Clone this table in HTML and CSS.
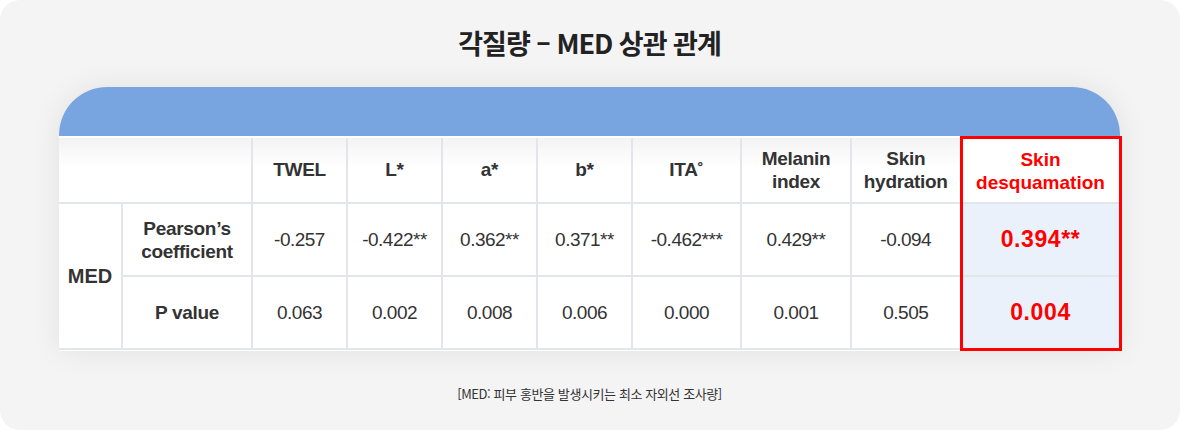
FILE: index.html
```html
<!DOCTYPE html>
<html lang="ko">
<head>
<meta charset="utf-8">
<link rel="stylesheet" href="styles.css">
</head>
<body>
<div class="card">
  <h1 class="title">각질량 – MED 상관 관계</h1>
  <div class="table-wrap">
    <div class="table-head-bar"></div>
    <table class="data">
      <colgroup>
        <col class="c-med"><col class="c-label"><col class="c-std"><col class="c-std"><col class="c-std"><col class="c-std"><col class="c-ita"><col class="c-wide"><col class="c-wide"><col class="c-hl">
      </colgroup>
      <thead>
        <tr>
          <th colspan="2"></th>
          <th>TWEL</th>
          <th>L*</th>
          <th>a*</th>
          <th>b*</th>
          <th>ITA˚</th>
          <th>Melanin<br>index</th>
          <th>Skin<br>hydration</th>
          <th class="hl hl-top">Skin<br>desquamation</th>
        </tr>
      </thead>
      <tbody>
        <tr>
          <th rowspan="2" class="rowhead">MED</th>
          <th class="rowlabel">Pearson’s<br>coefficient</th>
          <td>-0.257</td>
          <td>-0.422**</td>
          <td>0.362**</td>
          <td>0.371**</td>
          <td>-0.462***</td>
          <td>0.429**</td>
          <td>-0.094</td>
          <td class="hl hl-val">0.394**</td>
        </tr>
        <tr>
          <th class="rowlabel">P value</th>
          <td>0.063</td>
          <td>0.002</td>
          <td>0.008</td>
          <td>0.006</td>
          <td>0.000</td>
          <td>0.001</td>
          <td>0.505</td>
          <td class="hl hl-val hl-bottom">0.004</td>
        </tr>
      </tbody>
    </table>
  </div>
  <p class="note">[MED: 피부 홍반을 발생시키는 최소 자외선 조사량]</p>
</div>
</body>
</html>
```

FILE: styles.css
```css
html, body {
  margin: 0;
  padding: 0;
  background: #ffffff;
}

.card {
  width: 1180px;
  height: 430px;
  box-sizing: border-box;
  background: #f4f4f4;
  border-radius: 20px;
  padding: 29px 60px 0 59px;
  display: flex;
  flex-direction: column;
  align-items: stretch;
}

.title {
  margin: 0;
  font-family: "Noto Sans CJK KR", "Noto Sans", sans-serif;
  font-weight: 700;
  font-size: 27px;
  line-height: 28px;
  letter-spacing: -1px;
  color: #222222;
  text-align: center;
}

.table-wrap {
  margin-top: 30px;
  box-shadow: 0 0 30px rgba(0, 0, 0, 0.08);
  border-radius: 48px 48px 0 0;
}

.table-head-bar {
  height: 49px;
  background: #78a4df;
  border-radius: 48px 48px 0 0;
}

.data {
  width: 1061px;
  border-collapse: collapse;
  table-layout: fixed;
  background: #ffffff;
  font-family: "Liberation Sans", Arial, sans-serif;
  color: #333333;
}

.c-med { width: 63px; }
.c-label { width: 130px; }
.c-std { width: 95px; }
.c-ita { width: 109px; }
.c-wide { width: 110px; }
.c-hl { width: 159px; }

.data th,
.data td {
  border: 2px solid #e2e5ea;
  text-align: center;
  vertical-align: middle;
  padding: 0;
  font-size: 19px;
  line-height: 23px;
}

.data thead th {
  height: 63px;
  font-weight: 700;
  border-top: none;
  background: linear-gradient(#f3f3f4, #ffffff 45%);
  letter-spacing: -0.3px;
}

.data thead tr th:first-child {
  border-left: none;
}

.data tbody tr {
  height: 73px;
}

.data tbody th {
  font-weight: 700;
  letter-spacing: -0.3px;
}

.data .rowhead {
  border-left: none;
  letter-spacing: 0;
  font-size: 20px;
}

.data td {
  letter-spacing: -0.5px;
}

.data .hl {
  border-left: 3px solid #ff0000;
  border-right: 3px solid #ff0000;
  color: #ff0000;
}

.data thead th.hl {
  background: #ffffff;
  letter-spacing: 0;
}

.data .hl-top {
  border-top: 3px solid #ff0000;
}

.data .hl-val {
  background: #eaf1fb;
  font-weight: 700;
  font-size: 23px;
  letter-spacing: 0.6px;
}

.data .hl-bottom {
  border-bottom: 3px solid #ff0000;
}

.note {
  margin: 35px 0 0;
  font-family: "Noto Sans CJK KR", "Noto Sans", sans-serif;
  font-size: 13px;
  line-height: 16px;
  letter-spacing: -0.4px;
  color: #333333;
  text-align: center;
}
```
